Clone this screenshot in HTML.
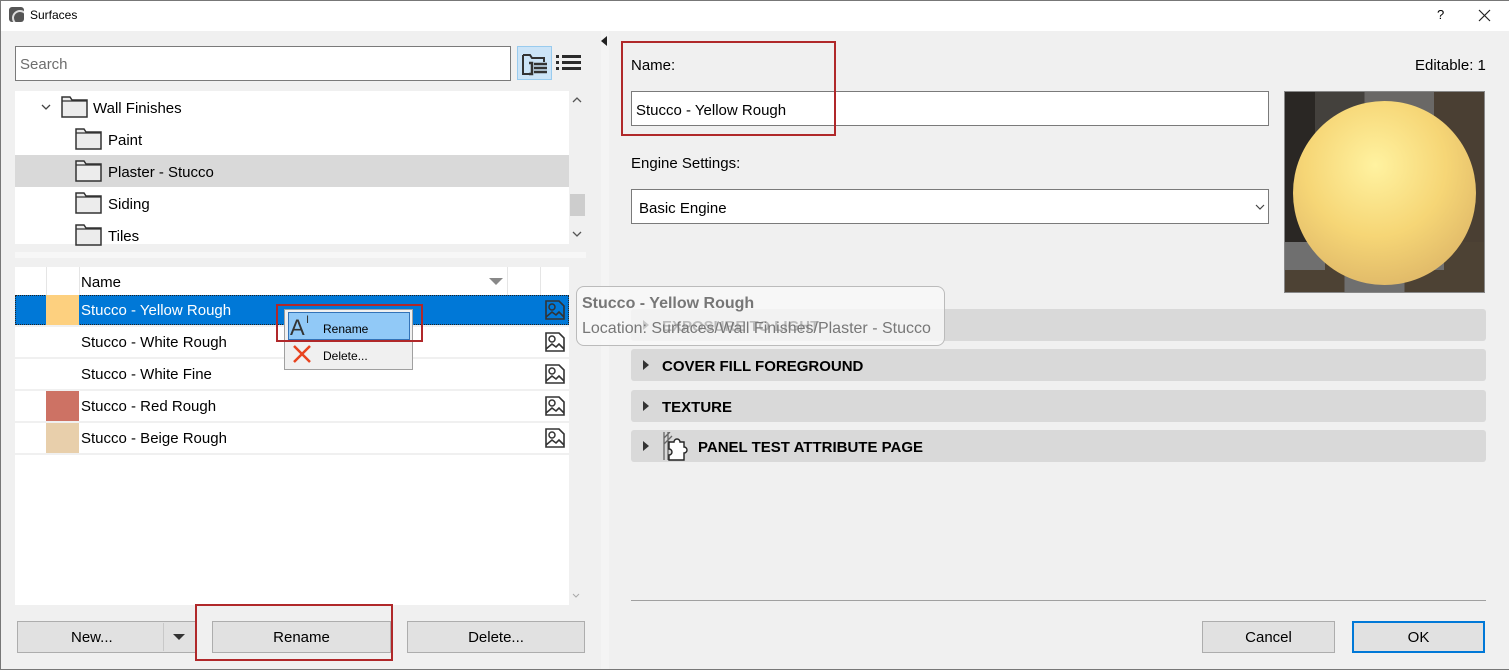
<!DOCTYPE html>
<html><head><meta charset="utf-8"><style>
*{box-sizing:border-box;margin:0;padding:0}
body{width:1509px;height:670px;overflow:hidden;background:#f0f0f0;font-family:"Liberation Sans",sans-serif;font-size:15px;color:#000;position:relative}
.a{position:absolute}
.fold{position:absolute;width:27px;height:22px}
.row{position:absolute;left:15px;width:554px;height:30px;background:#fff}
.row span{position:absolute;left:66px;top:7px}
.sw{position:absolute;left:31px;top:0;width:33px;height:30px}
.ic{position:absolute;left:530px;top:5px}
.btn{position:absolute;height:32px;background:#e1e1e1;border:1px solid #adadad;text-align:center;line-height:32px;font-size:15px}
.pan{position:absolute;left:631px;width:855px;height:32px;background:#d9d9d9;border-radius:3px;font-weight:bold;font-size:15px}
.pan b{position:absolute;left:31px;top:9px}
.tri{position:absolute;left:12px;top:11px;width:0;height:0;border-left:6px solid #333;border-top:5px solid transparent;border-bottom:5px solid transparent}
.red{position:absolute;border:2px solid #b0282a}
</style></head><body>
<div class="a" style="left:0;top:0;width:1509px;height:31px;background:#fff;border-top:1px solid #777;border-left:1px solid #777"></div>
<div class="a" style="left:0;top:0;width:1px;height:670px;background:#777"></div>
<div class="a" style="left:0;top:669px;width:1509px;height:1px;background:#777"></div>
<div class="a" style="left:9px;top:7px;width:15px;height:15px;background:#555;border-radius:3px;overflow:hidden"><div style="position:absolute;left:3px;top:3px;width:16px;height:16px;border:2px solid #ddd;border-radius:50%"></div></div>
<div class="a" style="left:30px;top:8px;font-size:12px">Surfaces</div>
<div class="a" style="left:1437px;top:7px;font-size:13px">?</div>
<svg class="a" style="left:1478px;top:9px" width="13" height="13"><path d="M1 1l11 11M12 1L1 12" stroke="#222" stroke-width="1.2"/></svg>

<div class="a" style="left:15px;top:46px;width:496px;height:35px;background:#fff;border:1px solid #7a7a7a"></div>
<div class="a" style="left:20px;top:56px;color:#6d6d6d">Search</div>
<div class="a" style="left:517px;top:46px;width:35px;height:34px;background:#cce4f7;border:1px solid #99cbee"></div>
<svg class="a" style="left:521px;top:52px" width="28" height="25" viewBox="0 0 28 25"><path d="M2 3h7l2 3h12v4M2 3v19h9" fill="none" stroke="#333" stroke-width="2"/><path d="M8 11h3v11h-3M13 12h13M13 16h13M13 20h13" stroke="#333" stroke-width="2.5" fill="none"/></svg>
<svg class="a" style="left:556px;top:54px" width="26" height="18"><g fill="#2b2b2b"><rect x="0" y="1" width="3" height="3"/><rect x="6" y="1" width="19" height="3"/><rect x="0" y="7" width="3" height="3"/><rect x="6" y="7" width="19" height="3"/><rect x="0" y="13" width="3" height="3"/><rect x="6" y="13" width="19" height="3"/></g></svg>

<div class="a" style="left:15px;top:91px;width:554px;height:153px;background:#fff"></div>
<div class="a" style="left:15px;top:155px;width:554px;height:32px;background:#d9d9d9"></div>
<div class="a" style="left:569px;top:91px;width:17px;height:153px;background:#f0f0f0"></div>
<div class="a" style="left:570px;top:194px;width:15px;height:22px;background:#cdcdcd"></div>
<svg class="a" style="left:572px;top:96px" width="10" height="8"><path d="M1 6l4-4 4 4" stroke="#555" fill="none" stroke-width="1.3"/></svg>
<svg class="a" style="left:572px;top:230px" width="10" height="8"><path d="M1 2l4 4 4-4" stroke="#555" fill="none" stroke-width="1.3"/></svg>
<svg class="a" style="left:41px;top:103px" width="10" height="8"><path d="M1 2l4 4 4-4" stroke="#444" fill="none" stroke-width="1.3"/></svg>
<svg width="0" height="0" style="position:absolute"><defs><symbol id="f" viewBox="0 0 27 22"><path d="M1 4V1h8l2 3h15v17H1z" fill="#ececec" stroke="#333" stroke-width="1.5"/><path d="M1 5h25" stroke="#333" stroke-width="1.2"/></symbol><symbol id="im" viewBox="0 0 20 20"><path d="M1 1h13l5 5v13H1z" fill="none" stroke="#333" stroke-width="1.6"/><circle cx="7" cy="7" r="3" fill="none" stroke="#333" stroke-width="1.5"/><path d="M1 17l6-5 4 3 3-3 5 5" fill="none" stroke="#333" stroke-width="1.6"/></symbol></defs></svg>
<svg class="fold" style="left:61px;top:96px"><use href="#f"/></svg><div class="a" style="left:93px;top:100px">Wall Finishes</div>
<svg class="fold" style="left:75px;top:128px"><use href="#f"/></svg><div class="a" style="left:108px;top:132px">Paint</div>
<svg class="fold" style="left:75px;top:160px"><use href="#f"/></svg><div class="a" style="left:108px;top:164px">Plaster - Stucco</div>
<svg class="fold" style="left:75px;top:192px"><use href="#f"/></svg><div class="a" style="left:108px;top:196px">Siding</div>
<svg class="fold" style="left:75px;top:224px"><use href="#f"/></svg><div class="a" style="left:108px;top:228px">Tiles</div>
<div class="a" style="left:15px;top:252px;width:571px;height:6px;background:#f7f7f7"></div>

<div class="a" style="left:15px;top:267px;width:554px;height:338px;background:#fff"></div>
<div class="a" style="left:46px;top:267px;width:1px;height:28px;background:#e5e5e5"></div>
<div class="a" style="left:79px;top:267px;width:1px;height:28px;background:#e5e5e5"></div>
<div class="a" style="left:507px;top:267px;width:1px;height:28px;background:#e5e5e5"></div>
<div class="a" style="left:540px;top:267px;width:1px;height:28px;background:#e5e5e5"></div>
<div class="a" style="left:81px;top:274px">Name</div>
<div class="a" style="left:489px;top:278px;border-top:7px solid #888;border-left:7px solid transparent;border-right:7px solid transparent"></div>
<div class="a" style="left:15px;top:325px;width:554px;height:130px;background:#f0f0f0"></div>
<div class="row" style="top:295px;background:#0078d7;border:1px dotted #222;height:30px"><div class="sw" style="background:#fdd07f;left:30px;top:-1px"></div><span style="color:#fff;left:65px;top:6px">Stucco - Yellow Rough</span><svg class="ic" width="20" height="20" style="top:4px;left:529px"><use href="#im"/></svg></div>
<div class="row" style="top:327px"><span>Stucco - White Rough</span><svg class="ic" width="20" height="20"><use href="#im"/></svg></div>
<div class="row" style="top:359px"><span>Stucco - White Fine</span><svg class="ic" width="20" height="20"><use href="#im"/></svg></div>
<div class="row" style="top:391px"><div class="sw" style="background:#cd7264"></div><span>Stucco - Red Rough</span><svg class="ic" width="20" height="20"><use href="#im"/></svg></div>
<div class="row" style="top:423px"><div class="sw" style="background:#e8cfab"></div><span>Stucco - Beige Rough</span><svg class="ic" width="20" height="20"><use href="#im"/></svg></div>
<svg class="a" style="left:572px;top:593px" width="8" height="6"><path d="M1 1l3 3 3-3" stroke="#aaa" fill="none"/></svg>

<div class="a" style="left:284px;top:309px;width:129px;height:61px;background:#f0f0f0;border:1px solid #a0a0a0"></div>
<div class="a" style="left:288px;top:312px;width:122px;height:28px;background:#91c9f7;border:1px solid #3373b8"></div>
<div class="a" style="left:290px;top:315px;font-size:22px;color:#333">A</div>
<div class="a" style="left:306px;top:314px;font-size:11px;color:#333">I</div>
<div class="a" style="left:323px;top:322px;font-size:12px">Rename</div>
<svg class="a" style="left:292px;top:344px" width="20" height="20"><path d="M2 2l16 16M18 2L2 18" stroke="#e8431f" stroke-width="2.5"/></svg>
<div class="a" style="left:323px;top:349px;font-size:12px">Delete...</div>
<div class="red" style="left:276px;top:304px;width:147px;height:38px"></div>

<div class="a" style="left:601px;top:31px;width:8px;height:638px;background:#f4f4f4"></div>
<div class="a" style="left:601px;top:36px;border-right:6px solid #222;border-top:5px solid transparent;border-bottom:5px solid transparent"></div>

<div class="a" style="left:631px;top:57px">Name:</div>
<div class="a" style="left:1415px;top:57px">Editable: 1</div>
<div class="a" style="left:631px;top:91px;width:638px;height:35px;background:#fff;border:1px solid #7a7a7a"></div>
<div class="a" style="left:636px;top:102px">Stucco - Yellow Rough</div>
<div class="red" style="left:621px;top:41px;width:215px;height:95px"></div>
<div class="a" style="left:631px;top:155px">Engine Settings:</div>
<div class="a" style="left:631px;top:189px;width:638px;height:35px;background:#fff;border:1px solid #7a7a7a"></div>
<div class="a" style="left:639px;top:200px">Basic Engine</div>
<svg class="a" style="left:1255px;top:204px" width="10" height="7"><path d="M1 1l4 4 4-4" stroke="#444" fill="none" stroke-width="1.2"/></svg>
<div class="a" style="left:1284px;top:91px;width:201px;height:202px;border:1px solid #888;overflow:hidden;background:#3a3835">
<div class="a" style="left:0;top:0;width:100%;height:100%;background:linear-gradient(90deg,#2a2724 0 15%,#44413d 15% 40%,#6a6866 40% 75%,#4a3f33 75%)"></div>
<div class="a" style="left:0;top:150px;width:100%;height:52px;background:linear-gradient(90deg,#6f6f6f 0 20%,#4d4234 20% 45%,#6f6f6f 45% 80%,#4d4234 80%)"></div>
<div class="a" style="left:0;top:178px;width:100%;height:24px;background:linear-gradient(90deg,#4d4234 0 30%,#6f6f6f 30% 60%,#4d4234 60%)"></div>
<div class="a" style="left:8px;top:9px;width:183px;height:184px;border-radius:50%;background:radial-gradient(circle at 45% 35%,#fff2a0 0%,#f6d676 45%,#dcb466 85%,#b89355 100%)"></div>
</div>

<div class="pan" style="top:309px"><div class="tri"></div><b>EXPOSURE TO LIGHT</b></div>
<div class="pan" style="top:349px"><div class="tri"></div><b>COVER FILL FOREGROUND</b></div>
<div class="pan" style="top:390px"><div class="tri"></div><b>TEXTURE</b></div>
<div class="pan" style="top:430px"><div class="tri"></div>
<svg class="a" style="left:30px;top:2px" width="30" height="30"><path d="M3 0v28M7 0v28M3 6l6-6M3 12l8-8" stroke="#666" stroke-width="1.3" fill="none"/><path d="M8 10h5a3 3 0 0 1 6 0h4v5a3 3 0 0 1 0 6v7H8v-5a3 3 0 0 0 0-6z" fill="#fff" stroke="#222" stroke-width="1.4"/></svg>
<b style="left:67px">PANEL TEST ATTRIBUTE PAGE</b></div>

<div class="a" style="left:576px;top:286px;width:369px;height:60px;border:1px solid #bbb;border-radius:8px;background:rgba(250,250,250,0.75)"></div>
<div class="a" style="left:582px;top:295px;font-weight:bold;color:#777;font-size:16px">Stucco - Yellow Rough</div>
<div class="a" style="left:582px;top:320px;color:#777;font-size:16px">Location: Surfaces/Wall Finishes/Plaster - Stucco</div>

<div class="a" style="left:631px;top:600px;width:855px;height:1px;background:#a0a0a0"></div>

<div class="btn" style="left:17px;top:621px;width:179px;text-align:left;padding-left:53px">New...</div>
<div class="a" style="left:163px;top:623px;width:1px;height:28px;background:#c8c8c8"></div>
<div class="a" style="left:173px;top:634px;border-top:6px solid #333;border-left:6px solid transparent;border-right:6px solid transparent"></div>
<div class="btn" style="left:212px;top:621px;width:179px">Rename</div>
<div class="red" style="left:195px;top:604px;width:198px;height:57px"></div>
<div class="btn" style="left:407px;top:621px;width:178px">Delete...</div>
<div class="btn" style="left:1202px;top:621px;width:133px">Cancel</div>
<div class="btn" style="left:1352px;top:621px;width:133px;border:2px solid #0078d7;line-height:30px">OK</div>
</body></html>
